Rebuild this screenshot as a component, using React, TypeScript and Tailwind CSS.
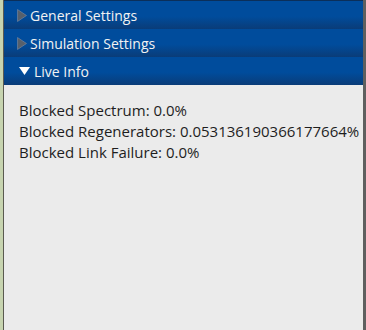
import React from "react";

function Header({ label, open }: { label: string; open?: boolean }) {
  return (
    <div className="flex h-[28px] items-center bg-[linear-gradient(to_bottom,#004c9c_0%,#004c9c_55%,#0a3c78_100%)] text-[14px] text-[#f2f2f2]">
      {open ? (
        <svg width="11" height="8" viewBox="0 0 11 8" className="ml-[15px] mr-[4px]">
          <polygon points="0,0 11,0 5.5,8" fill="#ffffff" />
        </svg>
      ) : (
        <svg width="10" height="13" viewBox="0 0 10 13" className="ml-[13px] mr-[3px]">
          <polygon points="0.5,0.5 9.5,6.5 0.5,12.5" fill="#56606c" stroke="#7a8ca4" strokeWidth="0.6" />
        </svg>
      )}
      <span>{label}</span>
    </div>
  );
}

export default function App() {
  return (
    <div
      className="flex h-[330px] w-[366px] bg-[#b9cca4]"
      style={{ fontFamily: '"Open Sans", "Noto Sans", sans-serif' }}
    >
      <div className="w-[3px] shrink-0 bg-[#c7d4b0]" />
      <div className="w-[1px] shrink-0 bg-[#5a5a50]" />
      <div className="flex min-w-0 flex-1 flex-col bg-[#ebebeb]">
        <div className="h-[1px] bg-[#0b2f5a]" />
        <Header label="General Settings" />
        <Header label="Simulation Settings" />
        <Header label="Live Info" open />
        <div className="flex flex-col pl-[15px] pt-[15px] text-[15px] leading-[21px] text-[#1e1e1e]">
          <div>Blocked Spectrum: 0.0%</div>
          <div className="whitespace-nowrap">Blocked Regenerators: 0.053136190366177664%</div>
          <div>Blocked Link Failure: 0.0%</div>
        </div>
      </div>
      <div className="w-[3px] shrink-0 bg-[#5f5f5f]" />
    </div>
  );
}
